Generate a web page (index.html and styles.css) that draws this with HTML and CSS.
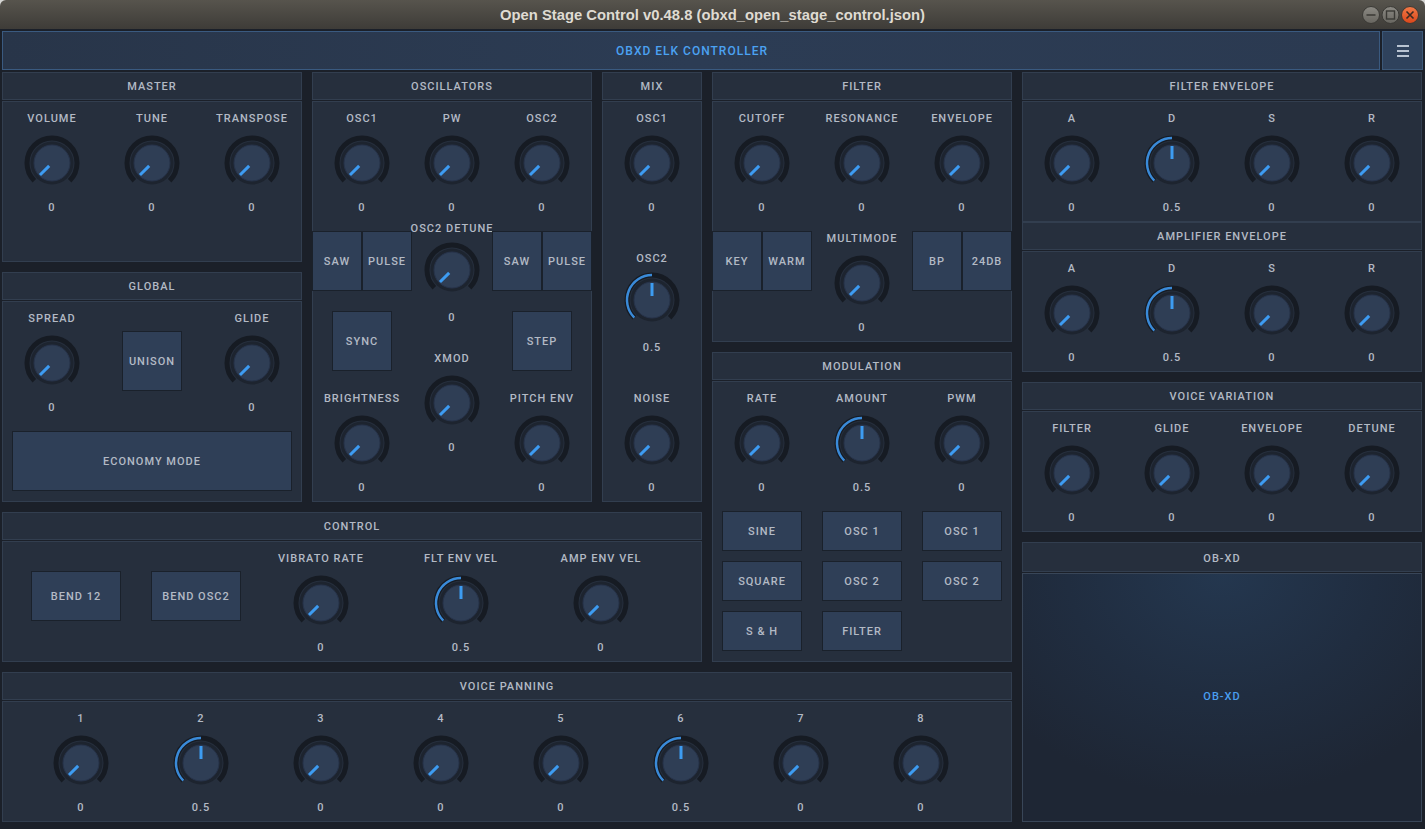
FILE: index.html
```html
<!DOCTYPE html>
<html>
<head>
<meta charset="utf-8">
<title>Open Stage Control</title>
<link rel="stylesheet" href="styles.css">
</head>
<body>
<svg class="defs" aria-hidden="true">
  <symbol id="k0" viewBox="0 0 60 60">
    <path d="M12.32 47.68A25 25 0 1 1 47.68 47.68" fill="none" stroke="#161b23" stroke-width="5"/>
    <circle cx="30" cy="30" r="21.5" fill="#1d242f"/>
    <circle cx="30" cy="30" r="18" fill="#2f3e55" stroke="#27334a" stroke-width="1"/>
    <line x1="27.17" y1="32.83" x2="17.98" y2="42.02" stroke="#3d9cf2" stroke-width="3"/>
  </symbol>
  <symbol id="k5" viewBox="0 0 60 60">
    <path d="M12.32 47.68A25 25 0 1 1 47.68 47.68" fill="none" stroke="#161b23" stroke-width="5"/>
    <path d="M12.32 47.68A25 25 0 0 1 30 5" fill="none" stroke="#3a8ad8" stroke-width="2.5"/>
    <circle cx="30" cy="30" r="21.5" fill="#1d242f"/>
    <circle cx="30" cy="30" r="18" fill="#2f3e55" stroke="#27334a" stroke-width="1"/>
    <line x1="30" y1="26" x2="30" y2="13" stroke="#3d9cf2" stroke-width="3"/>
  </symbol>
</svg>
<div class="window">
  <div class="titlebar">
    <div></div>
    <div class="title">Open Stage Control v0.48.8 (obxd_open_stage_control.json)</div>
    <div class="wm">
      <svg width="60" height="20" viewBox="0 0 60 20">
        <defs>
          <linearGradient id="gg" x1="0" y1="0" x2="0" y2="1"><stop offset="0" stop-color="#8c8a84"/><stop offset="1" stop-color="#67655f"/></linearGradient>
          <linearGradient id="og" x1="0" y1="0" x2="0" y2="1"><stop offset="0" stop-color="#f27a47"/><stop offset="1" stop-color="#d9461a"/></linearGradient>
        </defs>
        <circle cx="10" cy="10" r="8.5" fill="url(#gg)" stroke="#3a3935" stroke-width="1"/>
        <line x1="5.5" y1="10" x2="14.5" y2="10" stroke="#3a3935" stroke-width="1.5"/>
        <circle cx="29.5" cy="10" r="8.5" fill="url(#gg)" stroke="#3a3935" stroke-width="1"/>
        <rect x="25.5" y="6" width="8" height="8" fill="none" stroke="#3a3935" stroke-width="1.4"/>
        <circle cx="49" cy="10" r="8.5" fill="url(#og)" stroke="#3a3935" stroke-width="1"/>
        <path d="M45.5 6.5L52.5 13.5M52.5 6.5L45.5 13.5" stroke="#3a2a22" stroke-width="1.6"/>
      </svg>
    </div>
  </div>
  <div class="app">
    <div class="topbar">
      <div class="topbar-title">OBXD ELK CONTROLLER</div>
      <div class="menu-btn"><span></span><span></span><span></span></div>
    </div>
    <div class="main">
      <div class="left">
        <div class="upper">
          <div class="cluster">
            <div class="trio">
              <div class="col-a">
                <section class="panel master">
                  <div class="phead">MASTER</div>
                  <div class="pbody row">
                    <div class="knob"><div class="lbl">VOLUME</div><svg class="kn"><use href="#k0"/></svg><div class="val">0</div></div>
                    <div class="knob"><div class="lbl">TUNE</div><svg class="kn"><use href="#k0"/></svg><div class="val">0</div></div>
                    <div class="knob"><div class="lbl">TRANSPOSE</div><svg class="kn"><use href="#k0"/></svg><div class="val">0</div></div>
                  </div>
                </section>
                <section class="panel global">
                  <div class="phead">GLOBAL</div>
                  <div class="pbody">
                    <div class="row">
                      <div class="knob"><div class="lbl">SPREAD</div><svg class="kn"><use href="#k0"/></svg><div class="val">0</div></div>
                      <div class="btn-cell"><div class="btn sq">UNISON</div></div>
                      <div class="knob"><div class="lbl">GLIDE</div><svg class="kn"><use href="#k0"/></svg><div class="val">0</div></div>
                    </div>
                    <div class="eco-row"><div class="btn eco">ECONOMY MODE</div></div>
                  </div>
                </section>
              </div>
              <section class="panel osc">
                <div class="phead">OSCILLATORS</div>
                <div class="pbody osc-grid">
                  <div class="knob"><div class="lbl">OSC1</div><svg class="kn"><use href="#k0"/></svg><div class="val">0</div></div>
                  <div class="knob"><div class="lbl">PW</div><svg class="kn"><use href="#k0"/></svg><div class="val">0</div></div>
                  <div class="knob"><div class="lbl">OSC2</div><svg class="kn"><use href="#k0"/></svg><div class="val">0</div></div>
                  <div class="switch"><div class="btn">SAW</div><div class="btn">PULSE</div></div>
                  <div class="osc-mid">
                    <div class="knob up"><div class="lbl">OSC2 DETUNE</div><svg class="kn"><use href="#k0"/></svg><div class="val">0</div></div>
                    <div class="knob"><div class="lbl">XMOD</div><svg class="kn"><use href="#k0"/></svg><div class="val">0</div></div>
                  </div>
                  <div class="switch"><div class="btn">SAW</div><div class="btn">PULSE</div></div>
                  <div class="btn-cell"><div class="btn sq">SYNC</div></div>
                  <div class="btn-cell"><div class="btn sq">STEP</div></div>
                  <div class="knob"><div class="lbl">BRIGHTNESS</div><svg class="kn"><use href="#k0"/></svg><div class="val">0</div></div>
                  <div class="knob"><div class="lbl">PITCH ENV</div><svg class="kn"><use href="#k0"/></svg><div class="val">0</div></div>
                </div>
              </section>
              <section class="panel mix">
                <div class="phead">MIX</div>
                <div class="pbody mix-col">
                  <div class="knob"><div class="lbl">OSC1</div><svg class="kn"><use href="#k0"/></svg><div class="val">0</div></div>
                  <div class="knob up"><div class="lbl">OSC2</div><svg class="kn"><use href="#k5"/></svg><div class="val">0.5</div></div>
                  <div class="knob"><div class="lbl">NOISE</div><svg class="kn"><use href="#k0"/></svg><div class="val">0</div></div>
                </div>
              </section>
            </div>
            <section class="panel control">
              <div class="phead">CONTROL</div>
              <div class="pbody row">
                <div class="ctrl-btns">
                  <div class="btn bend">BEND 12</div>
                  <div class="btn bend">BEND OSC2</div>
                </div>
                <div class="ctrl-knobs">
                  <div class="knob"><div class="lbl">VIBRATO RATE</div><svg class="kn"><use href="#k0"/></svg><div class="val">0</div></div>
                  <div class="knob"><div class="lbl">FLT ENV VEL</div><svg class="kn"><use href="#k5"/></svg><div class="val">0.5</div></div>
                  <div class="knob"><div class="lbl">AMP ENV VEL</div><svg class="kn"><use href="#k0"/></svg><div class="val">0</div></div>
                </div>
              </div>
            </section>
          </div>
          <div class="col-d">
            <section class="panel filter">
              <div class="phead">FILTER</div>
              <div class="pbody">
                <div class="row">
                  <div class="knob"><div class="lbl">CUTOFF</div><svg class="kn"><use href="#k0"/></svg><div class="val">0</div></div>
                  <div class="knob"><div class="lbl">RESONANCE</div><svg class="kn"><use href="#k0"/></svg><div class="val">0</div></div>
                  <div class="knob"><div class="lbl">ENVELOPE</div><svg class="kn"><use href="#k0"/></svg><div class="val">0</div></div>
                </div>
                <div class="row">
                  <div class="switch"><div class="btn">KEY</div><div class="btn">WARM</div></div>
                  <div class="knob"><div class="lbl">MULTIMODE</div><svg class="kn"><use href="#k0"/></svg><div class="val">0</div></div>
                  <div class="switch"><div class="btn">BP</div><div class="btn">24DB</div></div>
                </div>
              </div>
            </section>
            <section class="panel modulation">
              <div class="phead">MODULATION</div>
              <div class="pbody">
                <div class="row">
                  <div class="knob"><div class="lbl">RATE</div><svg class="kn"><use href="#k0"/></svg><div class="val">0</div></div>
                  <div class="knob"><div class="lbl">AMOUNT</div><svg class="kn"><use href="#k5"/></svg><div class="val">0.5</div></div>
                  <div class="knob"><div class="lbl">PWM</div><svg class="kn"><use href="#k0"/></svg><div class="val">0</div></div>
                </div>
                <div class="btn-grid">
                  <div class="btn">SINE</div>
                  <div class="btn">OSC 1</div>
                  <div class="btn">OSC 1</div>
                  <div class="btn">SQUARE</div>
                  <div class="btn">OSC 2</div>
                  <div class="btn">OSC 2</div>
                  <div class="btn">S &amp; H</div>
                  <div class="btn">FILTER</div>
                </div>
              </div>
            </section>
          </div>
        </div>
        <section class="panel panning">
          <div class="phead">VOICE PANNING</div>
          <div class="pbody pan-row">
            <div class="knob"><div class="lbl">1</div><svg class="kn"><use href="#k0"/></svg><div class="val">0</div></div>
            <div class="knob"><div class="lbl">2</div><svg class="kn"><use href="#k5"/></svg><div class="val">0.5</div></div>
            <div class="knob"><div class="lbl">3</div><svg class="kn"><use href="#k0"/></svg><div class="val">0</div></div>
            <div class="knob"><div class="lbl">4</div><svg class="kn"><use href="#k0"/></svg><div class="val">0</div></div>
            <div class="knob"><div class="lbl">5</div><svg class="kn"><use href="#k0"/></svg><div class="val">0</div></div>
            <div class="knob"><div class="lbl">6</div><svg class="kn"><use href="#k5"/></svg><div class="val">0.5</div></div>
            <div class="knob"><div class="lbl">7</div><svg class="kn"><use href="#k0"/></svg><div class="val">0</div></div>
            <div class="knob"><div class="lbl">8</div><svg class="kn"><use href="#k0"/></svg><div class="val">0</div></div>
          </div>
        </section>
      </div>
      <div class="right">
        <section class="panel env">
          <div class="phead">FILTER ENVELOPE</div>
          <div class="pbody row">
            <div class="knob"><div class="lbl">A</div><svg class="kn"><use href="#k0"/></svg><div class="val">0</div></div>
            <div class="knob"><div class="lbl">D</div><svg class="kn"><use href="#k5"/></svg><div class="val">0.5</div></div>
            <div class="knob"><div class="lbl">S</div><svg class="kn"><use href="#k0"/></svg><div class="val">0</div></div>
            <div class="knob"><div class="lbl">R</div><svg class="kn"><use href="#k0"/></svg><div class="val">0</div></div>
          </div>
        </section>
        <section class="panel env">
          <div class="phead">AMPLIFIER ENVELOPE</div>
          <div class="pbody row">
            <div class="knob"><div class="lbl">A</div><svg class="kn"><use href="#k0"/></svg><div class="val">0</div></div>
            <div class="knob"><div class="lbl">D</div><svg class="kn"><use href="#k5"/></svg><div class="val">0.5</div></div>
            <div class="knob"><div class="lbl">S</div><svg class="kn"><use href="#k0"/></svg><div class="val">0</div></div>
            <div class="knob"><div class="lbl">R</div><svg class="kn"><use href="#k0"/></svg><div class="val">0</div></div>
          </div>
        </section>
        <section class="panel env spaced">
          <div class="phead">VOICE VARIATION</div>
          <div class="pbody row">
            <div class="knob"><div class="lbl">FILTER</div><svg class="kn"><use href="#k0"/></svg><div class="val">0</div></div>
            <div class="knob"><div class="lbl">GLIDE</div><svg class="kn"><use href="#k0"/></svg><div class="val">0</div></div>
            <div class="knob"><div class="lbl">ENVELOPE</div><svg class="kn"><use href="#k0"/></svg><div class="val">0</div></div>
            <div class="knob"><div class="lbl">DETUNE</div><svg class="kn"><use href="#k0"/></svg><div class="val">0</div></div>
          </div>
        </section>
        <section class="panel obxd spaced">
          <div class="phead tall">OB-XD</div>
          <div class="pbody obxd-body">OB-XD</div>
        </section>
      </div>
    </div>
  </div>
</div>
</body>
</html>
```
FILE: styles.css
```css
* { box-sizing: border-box; }
html, body { margin: 0; padding: 0; }
body {
  background: #d6d6d4;
  font-family: Roboto, "Noto Sans", sans-serif;
  font-weight: 500;
  font-size: 11px;
  letter-spacing: 1px;
  color: #b3bac5;
  width: 1425px;
  height: 829px;
  overflow: hidden;
}
.defs { position: absolute; width: 0; height: 0; overflow: hidden; }
.window { width: 1425px; height: 829px; display: flex; flex-direction: column; }

/* title bar */
.titlebar {
  height: 29px;
  flex: none;
  display: grid;
  grid-template-columns: 1fr auto 1fr;
  align-items: center;
  background: linear-gradient(#57544d, #3e3c38);
  border-radius: 6px 6px 0 0;
}
.title {
  font-family: "Liberation Sans", Arial, sans-serif;
  font-weight: bold;
  font-size: 14.8px;
  letter-spacing: 0;
  color: #dfdbd2;
  padding-top: 1px;
}
.wm { display: flex; justify-content: flex-end; padding-right: 4px; padding-top: 1px; }
.wm svg { display: block; }

/* app */
.app {
  flex: 1;
  background: #1b2029;
  padding: 2px 2px 0 2px;
}
.topbar { display: flex; gap: 2px; height: 39px; margin-bottom: 2px; }
.topbar-title {
  flex: 1;
  display: flex;
  align-items: center;
  justify-content: center;
  background: linear-gradient(90deg, #283549, #2c3c54 50%, #2b3a51);
  border: 1px solid #3a5a80;
  color: #4ba2f2;
  font-size: 12px;
  padding-left: 2px;
  padding-top: 1px;
}
.menu-btn {
  width: 41px;
  background: #2f425c;
  border: 1px solid #3c5878;
  display: flex;
  flex-direction: column;
  align-items: center;
  justify-content: center;
  gap: 3px;
}
.menu-btn span { display: block; width: 12px; height: 2px; background: #b9c4d2; }

.main { display: flex; gap: 10px; }
.left { width: 1010px; display: flex; flex-direction: column; gap: 10px; }
.upper { display: flex; gap: 10px; }
.cluster { width: 700px; display: flex; flex-direction: column; gap: 10px; }
.trio { display: flex; gap: 10px; height: 430px; }
.col-a { width: 300px; display: flex; flex-direction: column; gap: 10px; }
.col-d { width: 300px; display: flex; flex-direction: column; gap: 10px; }
.right { width: 400px; display: flex; flex-direction: column; }

/* panels */
.panel { display: flex; flex-direction: column; }
.phead {
  flex: none;
  height: 28px;
  padding-top: 2px;
  line-height: 26px;
  margin-bottom: 1px;
  text-align: center;
  background: #262f3d;
  box-shadow: inset 0 0 0 1px #323e4f;
}
.phead.tall { height: 30px; padding-top: 3px; line-height: 27px; }
.pbody {
  flex: 1;
  background: #262f3d;
  box-shadow: inset 0 0 0 1px #323e4f;
}
.master { height: 190px; }
.global { height: 230px; }
.osc { width: 280px; }
.mix { width: 100px; }
.control { height: 150px; }
.filter { height: 270px; }
.modulation { height: 310px; }
.panning { height: 150px; }
.env { height: 150px; }
.obxd { height: 280px; }
.spaced { margin-top: 10px; }

.row { display: flex; }

/* knob */
.knob {
  width: 100px;
  height: 120px;
  flex: none;
  display: flex;
  flex-direction: column;
  align-items: center;
}
.lbl { margin-top: 8px; height: 20px; line-height: 20px; white-space: nowrap; }
.kn { display: block; width: 60px; height: 60px; margin-top: 4px; }
.val { margin-top: 5px; line-height: 20px; }
.knob.up .kn { margin-top: 1px; }
.knob.up .val { margin-top: 8px; }

/* buttons */
.btn {
  background: #2f3f57;
  box-shadow: inset 0 0 0 1px #1a212b;
  display: flex;
  align-items: center;
  justify-content: center;
  white-space: nowrap;
  padding-top: 1px;
}
.btn-cell { width: 100px; height: 120px; display: flex; align-items: center; justify-content: center; }
.btn.sq { width: 60px; height: 60px; }
.eco-row { padding: 10px; height: 80px; }
.btn.eco { height: 60px; }
.switch { display: flex; width: 100px; height: 60px; margin-top: 10px; align-self: flex-start; }
.switch .btn { width: 50px; height: 60px; }

/* oscillators */
.osc-grid {
  display: grid;
  grid-template-columns: 100px 80px 100px;
  grid-template-rows: 120px 80px 80px 120px;
}
.osc-grid .knob { width: auto; }
.osc-grid .btn-cell { width: auto; height: auto; }
.osc-mid { grid-row: span 3; margin-top: -10px; display: flex; flex-direction: column; gap: 10px; }
.osc-mid .knob { width: auto; }

/* mix */
.mix-col { display: flex; flex-direction: column; gap: 20px; }

/* modulation */
.btn-grid {
  display: grid;
  grid-template-columns: repeat(3, 80px);
  grid-auto-rows: 40px;
  gap: 10px 20px;
  padding: 10px;
}

/* control */
.ctrl-btns { display: flex; gap: 30px; padding-left: 29px; padding-top: 30px; }
.btn.bend { width: 90px; height: 50px; }
.ctrl-knobs { display: flex; gap: 40px; margin-left: 30px; }

/* panning */
.pan-row { display: flex; gap: 20px; padding-left: 29px; }

/* ob-xd */
.obxd-body {
  display: flex;
  align-items: center;
  justify-content: center;
  color: #4a9ff0;
  background: radial-gradient(ellipse 70% 90% at 50% 0%, #24374f 0%, #202d40 55%, #1e2634 100%);
  box-shadow: inset 0 0 0 1px #394658;
  padding-bottom: 3px;
}
```
